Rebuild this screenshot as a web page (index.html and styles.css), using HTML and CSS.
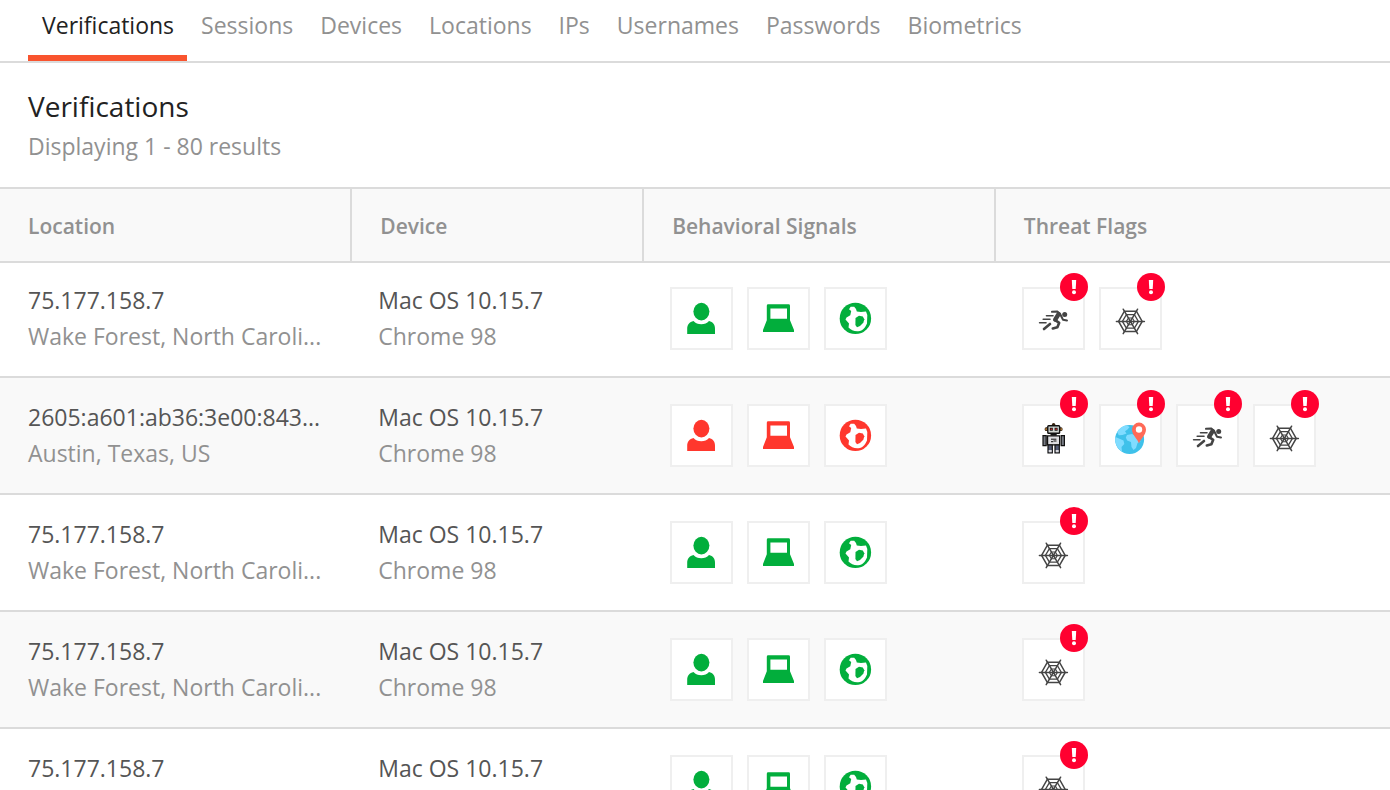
FILE: index.html
```html
<!DOCTYPE html>
<html lang="en">
<head>
<meta charset="utf-8">
<meta name="viewport" content="width=device-width, initial-scale=1">
<title>Verifications</title>
<link rel="stylesheet" href="styles.css">
</head>
<body>
<svg class="sprite" aria-hidden="true">
  <symbol id="user" viewBox="0 0 33 33">
    <ellipse cx="16.4" cy="9.6" rx="8" ry="8.8"/>
    <path d="M2.2 32V27C2.2 22.5 4.5 20 8.5 19C10.5 21.3 13 22.2 16.3 22.2S22 21.3 24 19C28 20 30 22.5 30 27V32Z"/>
  </symbol>
  <symbol id="laptop" viewBox="0 0 33 33">
    <path fill-rule="evenodd" d="M6.2 2.3H26.6Q28 2.3 28 3.7V18.3L32 28V30H1V28L4.8 18.3V3.7Q4.8 2.3 6.2 2.3ZM8.4 6.4V16.7H25V6.4Z"/>
  </symbol>
  <symbol id="globe" viewBox="0 0 33 33">
    <circle cx="16.4" cy="16.4" r="15.7"/>
    <path fill="#fff" d="M10 7.3L11.7 4.8H15.2L17 7L17.8 9.5L22 10L27 9.5L28.3 13L28 21.5C26 26 24 28.6 19.3 29.3C15 29.6 12 28 9.5 25.5L10 21.5L6.5 17.6L7.5 15.4L11.3 13.3L12.2 9Z"/>
    <path d="M16.5 15.9L20 13.7L23.8 14.6L25.3 17.3L24.3 20.8L21 24L18 25.3L16.4 23Z"/>
  </symbol>
  <symbol id="runner" viewBox="0 3 33 33">
    <g fill="none" stroke="#444" stroke-linecap="round" stroke-linejoin="round">
      <path stroke-width="1.6" d="M9.5 13.7H16M6.2 17.3H13M2.6 20.8H9"/>
      <path stroke-width="2" d="M15 9.8L20 9.4L23 11.8L26 17.8L30 18.6"/>
      <path stroke-width="4.4" d="M21.7 12L18.2 17.6"/>
      <path stroke-width="2.6" d="M18.2 18.2L22.2 20.8L20.4 25.3L15.8 26.5M13 22L7 27"/>
    </g>
    <circle cx="27.7" cy="12.6" r="2.5" fill="#444"/>
  </symbol>
  <symbol id="web" viewBox="0 3 33 33">
    <g fill="none" stroke="#444" stroke-width="1.5" stroke-linecap="round">
      <path d="M2.4 19.4H30.4M9.2 7.2L23.6 31.6M23.6 7.2L9.2 31.6"/>
      <path d="M4.6 19.4L10.4 9.2H22.4L28.2 19.4L22.4 29.6H10.4Z"/>
      <path stroke-width="1.3" d="M8.4 19.4L12.4 12.7H20.4L24.4 19.4L20.4 26.1H12.4Z"/>
      <path stroke-width="1.1" d="M12.4 19.4L14.4 16H18.4L20.4 19.4L18.4 22.8H14.4Z"/>
    </g>
  </symbol>
  <symbol id="robot" viewBox="0 3 33 33">
    <circle cx="16.6" cy="5.6" r="1.7" fill="#3a2410"/>
    <rect x="7.7" y="8.3" width="17.8" height="3.8" rx="1.5" fill="#2a1a0c"/>
    <path fill="#c98a3c" d="M8.4 9.2h1.4v2H8.4zM23.4 9.2h1.4v2h-1.4z"/>
    <rect x="10.8" y="6.8" width="11.8" height="7.4" rx=".8" fill="#d3d8d4" stroke="#111" stroke-width="1.4"/>
    <path fill="#151515" d="M12.8 8.8h3v3h-3zM17.6 8.8h3v3h-3zM13.5 14.4h6.2v2.4h-6.2z"/>
    <path fill="#c22a2a" d="M13.6 9.6h1.5v1.5h-1.5zM18.4 9.6h1.5v1.5h-1.5z"/>
    <path fill="#777b84" stroke="#111" stroke-width="1.2" d="M6 16.6h3.2v10H6zM24.2 16.6h3.2v10h-3.2z"/>
    <path fill="#dedee2" stroke="#111" stroke-width="1.2" d="M10.6 16.8h12v9h-12z"/>
    <path fill="none" stroke="#111" stroke-width="1" d="M14 20.2h5.4M14 22.7h2.2M16.5 22h3"/>
    <path fill="#555c77" stroke="#111" stroke-width="1.2" d="M11 26h4.3v7.8H11zM18 26h4.3v7.8H18z"/>
    <path fill="#d8d8dc" d="M11.7 31h3v2.2h-3zM18.7 31h3v2.2h-3z"/>
  </symbol>
  <symbol id="place" viewBox="0 3 33 33">
    <circle cx="15.6" cy="20.4" r="14.5" fill="#3fc1ea"/>
    <path fill="#80dcff" d="M3.2 13C5 9.5 8.5 7 12.5 6.3L15.6 8L13.5 10.5L11 12.3L12.5 14.5L8.5 16L4.8 16.2ZM1.4 18L5 19.5L9.5 21.5L10.3 25L7.5 28L8 32.5C4 30 1 25 1.1 20ZM13 16L18 15L23 17.5L26.5 22.5L23.5 24L22 29L19.5 31L17.5 28L17 23L13.2 21.5L11.8 18.5Z"/>
    <path fill="#ff6a57" d="M25 24.6C23.8 20.2 18 16.5 18 10.6A7 7 0 0 1 32 10.6C32 16.5 26.2 20.2 25 24.6Z"/>
    <circle cx="25" cy="10.5" r="3.2" fill="#fff"/>
  </symbol>
  <symbol id="alert" viewBox="0 0 28 28">
    <circle cx="14" cy="14" r="14" fill="#ff0030"/>
    <path fill="#fff" d="M11.8 7h4.4l-.5 9h-3.4z"/>
    <circle cx="14" cy="19.3" r="2" fill="#fff"/>
  </symbol>
</svg>

<div class="page">
  <nav class="tabs" aria-label="Sections">
    <a class="tab tab-active" href="#verifications" aria-current="page">Verifications</a>
    <a class="tab" href="#sessions">Sessions</a>
    <a class="tab" href="#devices">Devices</a>
    <a class="tab" href="#locations">Locations</a>
    <a class="tab" href="#ips">IPs</a>
    <a class="tab" href="#usernames">Usernames</a>
    <a class="tab" href="#passwords">Passwords</a>
    <a class="tab" href="#biometrics">Biometrics</a>
  </nav>

  <header class="heading">
    <h1 class="title">Verifications</h1>
    <p class="summary">Displaying 1 - 80 results</p>
  </header>

  <table class="results">
    <thead>
      <tr>
        <th class="col-location" scope="col">Location</th>
        <th class="col-device" scope="col">Device</th>
        <th class="col-signals" scope="col">Behavioral Signals</th>
        <th scope="col">Threat Flags</th>
      </tr>
    </thead>
    <tbody>
      <tr>
        <td><p class="primary">75.177.158.7</p><p class="secondary">Wake Forest, North Caroli...</p></td>
        <td><p class="primary">Mac OS 10.15.7</p><p class="secondary">Chrome 98</p></td>
        <td><div class="icons good">
          <span class="box"><svg class="icon"><use href="#user"/></svg></span>
          <span class="box"><svg class="icon"><use href="#laptop"/></svg></span>
          <span class="box"><svg class="icon"><use href="#globe"/></svg></span>
        </div></td>
        <td><div class="icons">
          <span class="box flag"><svg class="icon"><use href="#runner"/></svg><svg class="badge"><use href="#alert"/></svg></span>
          <span class="box flag"><svg class="icon"><use href="#web"/></svg><svg class="badge"><use href="#alert"/></svg></span>
        </div></td>
      </tr>
      <tr>
        <td><p class="primary">2605:a601:ab36:3e00:843...</p><p class="secondary">Austin, Texas, US</p></td>
        <td><p class="primary">Mac OS 10.15.7</p><p class="secondary">Chrome 98</p></td>
        <td><div class="icons bad">
          <span class="box"><svg class="icon"><use href="#user"/></svg></span>
          <span class="box"><svg class="icon"><use href="#laptop"/></svg></span>
          <span class="box"><svg class="icon"><use href="#globe"/></svg></span>
        </div></td>
        <td><div class="icons">
          <span class="box flag"><svg class="icon"><use href="#robot"/></svg><svg class="badge"><use href="#alert"/></svg></span>
          <span class="box flag"><svg class="icon"><use href="#place"/></svg><svg class="badge"><use href="#alert"/></svg></span>
          <span class="box flag"><svg class="icon"><use href="#runner"/></svg><svg class="badge"><use href="#alert"/></svg></span>
          <span class="box flag"><svg class="icon"><use href="#web"/></svg><svg class="badge"><use href="#alert"/></svg></span>
        </div></td>
      </tr>
      <tr>
        <td><p class="primary">75.177.158.7</p><p class="secondary">Wake Forest, North Caroli...</p></td>
        <td><p class="primary">Mac OS 10.15.7</p><p class="secondary">Chrome 98</p></td>
        <td><div class="icons good">
          <span class="box"><svg class="icon"><use href="#user"/></svg></span>
          <span class="box"><svg class="icon"><use href="#laptop"/></svg></span>
          <span class="box"><svg class="icon"><use href="#globe"/></svg></span>
        </div></td>
        <td><div class="icons">
          <span class="box flag"><svg class="icon"><use href="#web"/></svg><svg class="badge"><use href="#alert"/></svg></span>
        </div></td>
      </tr>
      <tr>
        <td><p class="primary">75.177.158.7</p><p class="secondary">Wake Forest, North Caroli...</p></td>
        <td><p class="primary">Mac OS 10.15.7</p><p class="secondary">Chrome 98</p></td>
        <td><div class="icons good">
          <span class="box"><svg class="icon"><use href="#user"/></svg></span>
          <span class="box"><svg class="icon"><use href="#laptop"/></svg></span>
          <span class="box"><svg class="icon"><use href="#globe"/></svg></span>
        </div></td>
        <td><div class="icons">
          <span class="box flag"><svg class="icon"><use href="#web"/></svg><svg class="badge"><use href="#alert"/></svg></span>
        </div></td>
      </tr>
      <tr>
        <td><p class="primary">75.177.158.7</p><p class="secondary">Wake Forest, North Caroli...</p></td>
        <td><p class="primary">Mac OS 10.15.7</p><p class="secondary">Chrome 98</p></td>
        <td><div class="icons good">
          <span class="box"><svg class="icon"><use href="#user"/></svg></span>
          <span class="box"><svg class="icon"><use href="#laptop"/></svg></span>
          <span class="box"><svg class="icon"><use href="#globe"/></svg></span>
        </div></td>
        <td><div class="icons">
          <span class="box flag"><svg class="icon"><use href="#web"/></svg><svg class="badge"><use href="#alert"/></svg></span>
        </div></td>
      </tr>
    </tbody>
  </table>
</div>
</body>
</html>
```

FILE: styles.css
```css
* {
  box-sizing: border-box;
}

body {
  margin: 0;
  background: #fff;
  color: #222;
  font-family: "Open Sans", "Noto Sans", sans-serif;
  font-size: 23px;
}

h1,
p {
  margin: 0;
}

.sprite {
  display: none;
}

.page {
  height: 100vh;
  overflow: hidden;
}

.tabs {
  display: flex;
  padding: 0 28px;
  border-bottom: 2px solid #dbdbdb;
}

.tab {
  padding: 9px 13px 14px 14px;
  border-bottom: 6px solid transparent;
  color: #919191;
  line-height: 32px;
  text-decoration: none;
}

.tab-active {
  border-bottom-color: #f9542e;
  color: #222;
}

.heading {
  padding: 23px 28px 21px;
  line-height: 40px;
}

.title {
  font-size: 28px;
  font-weight: 400;
}

.summary {
  color: #919191;
}

.results {
  width: 100%;
  border-spacing: 0;
  border-top: 2px solid #dbdbdb;
  table-layout: fixed;
}

.col-location {
  width: 25.2%;
}

.col-device {
  width: 21%;
}

.col-signals {
  width: 25.3%;
}

th {
  padding: 21px 28px 19px;
  border-bottom: 2px solid #dbdbdb;
  background: #f9f9f9;
  color: #919191;
  font-size: 21px;
  font-weight: 600;
  line-height: 32px;
  text-align: left;
}

th + th {
  border-left: 2px solid #dbdbdb;
}

td {
  padding: 21px 0 22px 28px;
  border-bottom: 2px solid #dbdbdb;
  vertical-align: middle;
}

tbody tr:first-child td {
  padding-top: 19px;
}

tbody tr:nth-child(even) {
  background: #f9f9f9;
}

.primary,
.secondary {
  line-height: 36px;
  white-space: nowrap;
}

.primary {
  color: #555;
}

.secondary {
  color: #919191;
}

.icons {
  display: flex;
  gap: 14px;
}

.box {
  position: relative;
  display: flex;
  flex: none;
  align-items: center;
  justify-content: center;
  width: 63px;
  height: 63px;
  border: 2px solid #efefef;
  background: #fff;
}

.flag {
  padding-top: 6px;
}

.icon {
  width: 33px;
  height: 33px;
}

.good {
  fill: #02ae3c;
}

.bad {
  fill: #ff372d;
}

.badge {
  position: absolute;
  top: -16px;
  right: -5px;
  width: 28px;
  height: 28px;
}
```
